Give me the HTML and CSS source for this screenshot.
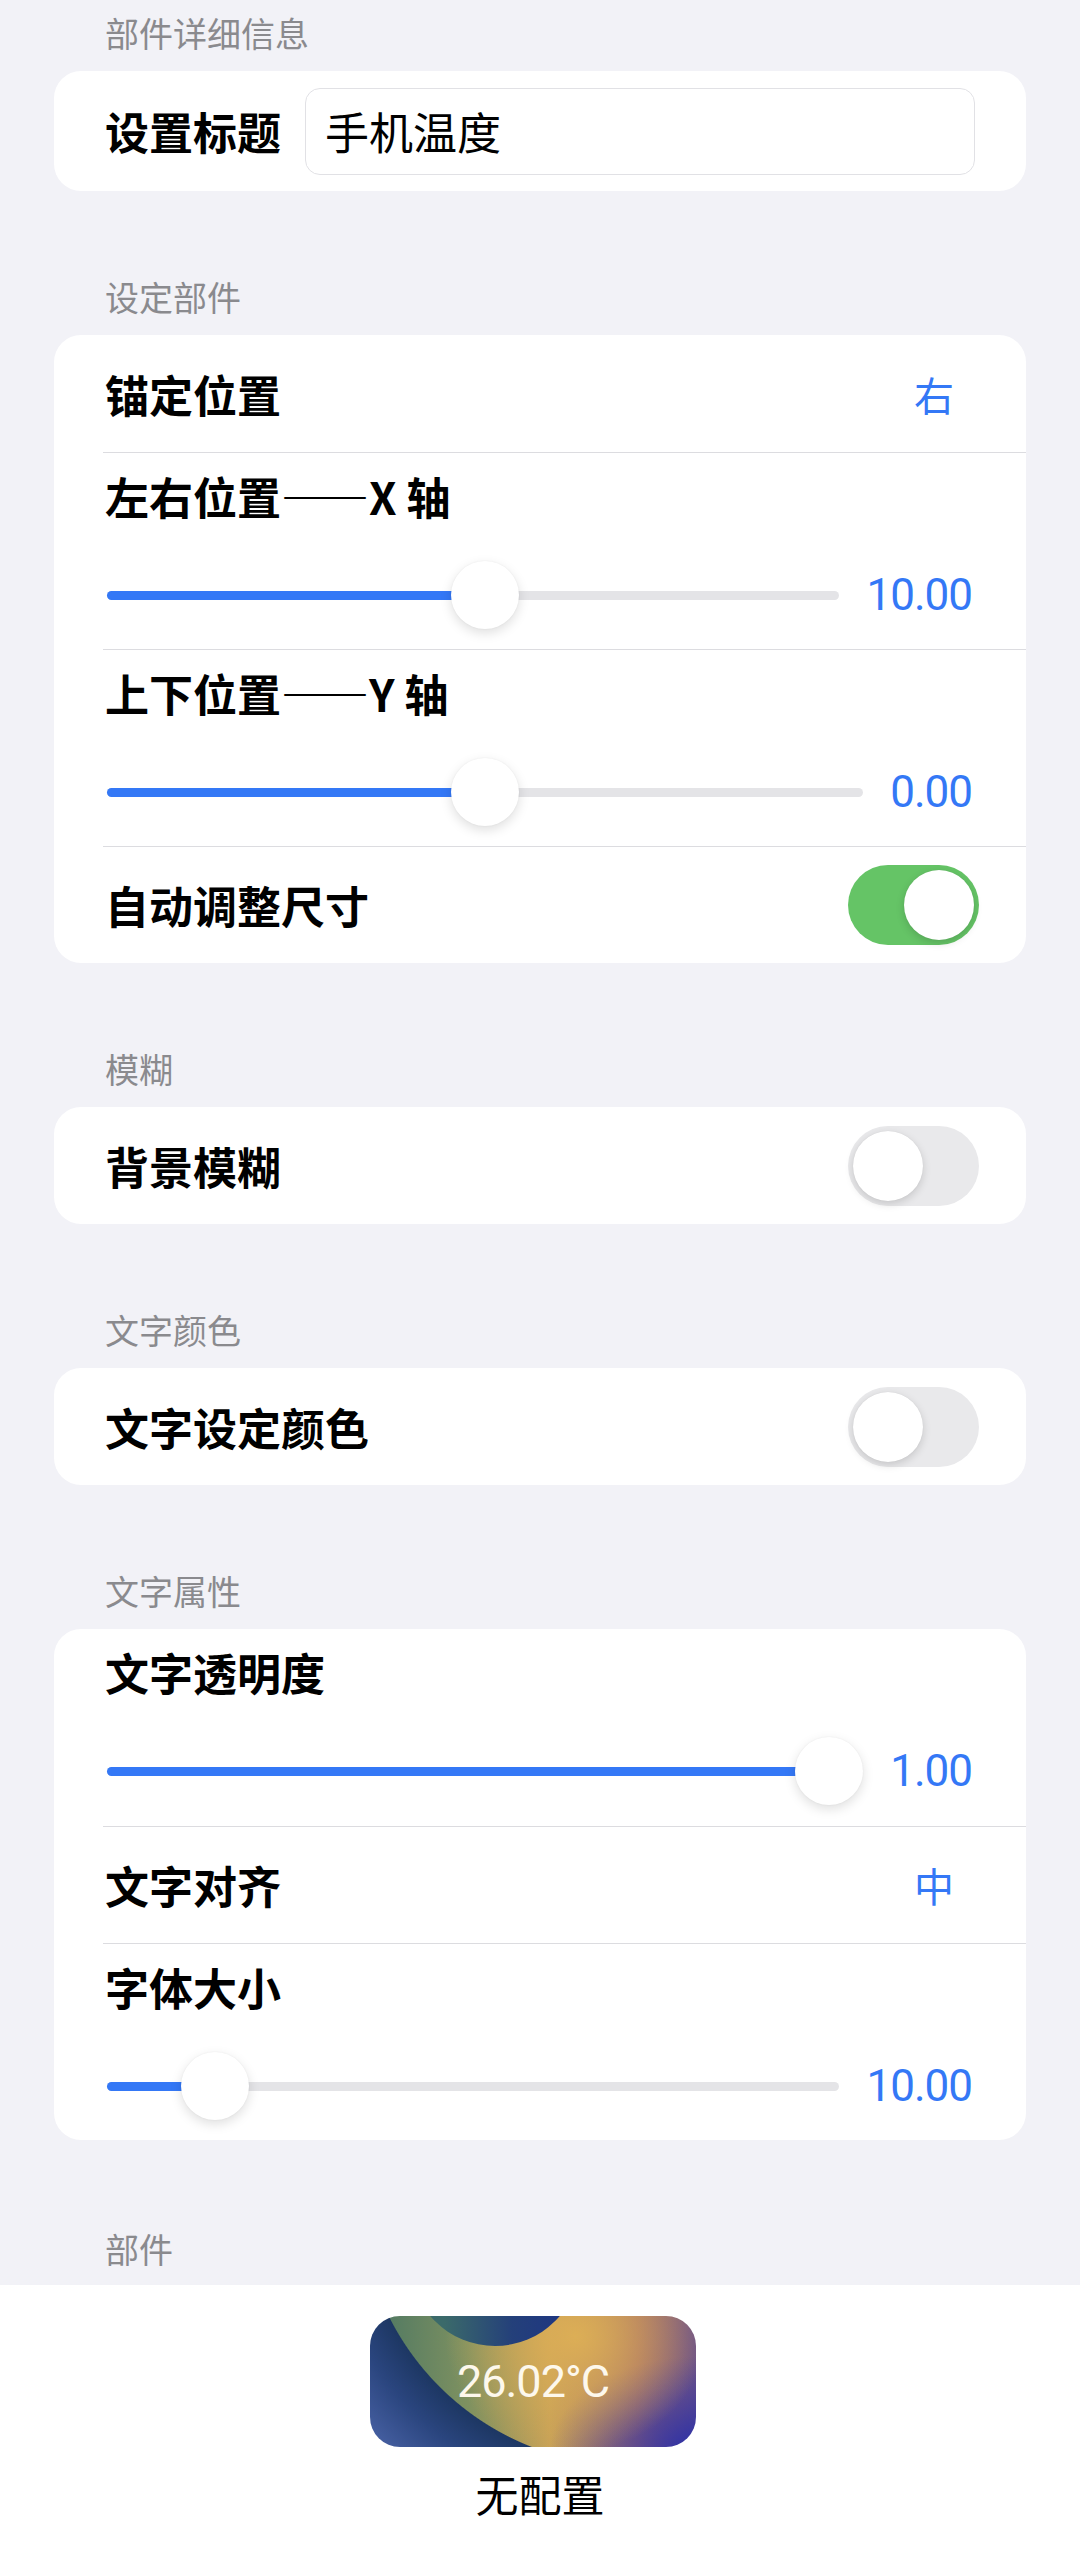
FILE: index.html
```html
<!DOCTYPE html>
<html lang="zh-CN">
<head>
  <meta charset="UTF-8">
  <title>部件设置</title>
  <link rel="stylesheet" href="styles.css">
</head>
<body>
<div class="page">
  <section class="group">
    <h2 class="group-title">部件详细信息</h2>
    <div class="card title-card">
      <span class="label">设置标题</span>
      <div class="text-field">手机温度</div>
    </div>
  </section>

  <section class="group">
    <h2 class="group-title">设定部件</h2>
    <div class="card">
      <div class="row">
        <span class="label">锚定位置</span>
        <span class="menu-value">右</span>
      </div>
      <div class="slider-row">
        <span class="label">左右位置——X 轴</span>
        <div class="slider-line">
          <div class="track" style="--pos: 0.517">
            <div class="fill"></div>
            <div class="thumb"></div>
          </div>
          <span class="num">10.00</span>
        </div>
      </div>
      <div class="slider-row">
        <span class="label">上下位置——Y 轴</span>
        <div class="slider-line">
          <div class="track" style="--pos: 0.5">
            <div class="fill"></div>
            <div class="thumb"></div>
          </div>
          <span class="num">0.00</span>
        </div>
      </div>
      <div class="row">
        <span class="label">自动调整尺寸</span>
        <span class="switch on"><span class="knob"></span></span>
      </div>
    </div>
  </section>

  <section class="group">
    <h2 class="group-title">模糊</h2>
    <div class="card">
      <div class="row">
        <span class="label">背景模糊</span>
        <span class="switch"><span class="knob"></span></span>
      </div>
    </div>
  </section>

  <section class="group">
    <h2 class="group-title">文字颜色</h2>
    <div class="card">
      <div class="row">
        <span class="label">文字设定颜色</span>
        <span class="switch"><span class="knob"></span></span>
      </div>
    </div>
  </section>

  <section class="group">
    <h2 class="group-title">文字属性</h2>
    <div class="card">
      <div class="slider-row">
        <span class="label">文字透明度</span>
        <div class="slider-line">
          <div class="track" style="--pos: 1">
            <div class="fill"></div>
            <div class="thumb"></div>
          </div>
          <span class="num">1.00</span>
        </div>
      </div>
      <div class="row">
        <span class="label">文字对齐</span>
        <span class="menu-value">中</span>
      </div>
      <div class="slider-row">
        <span class="label">字体大小</span>
        <div class="slider-line">
          <div class="track" style="--pos: 0.111">
            <div class="fill"></div>
            <div class="thumb"></div>
          </div>
          <span class="num">10.00</span>
        </div>
      </div>
    </div>
  </section>

  <section class="group last">
    <h2 class="group-title">部件</h2>
  </section>
</div>

<footer class="preview">
  <div class="widget">
    <span class="widget-text">26.02°C</span>
  </div>
  <div class="preview-name">无配置</div>
</footer>
</body>
</html>
```

FILE: styles.css
```css
html, body {
  margin: 0;
  padding: 0;
  background: #f2f2f7;
  font-family: "Noto Sans CJK SC", "Noto Sans", sans-serif;
  color: #000;
}
.page {
  padding: 16px 54px 0;
}
.group {
  margin-bottom: 89px;
}
.group.last {
  margin-top: 92px;
  margin-bottom: 0;
}
.group-title {
  margin: 0 0 21px 51px;
  font-size: 34px;
  line-height: 34px;
  font-weight: 400;
  color: #8a8a8e;
}
.group.last .group-title {
  margin-bottom: 19px;
}
.card {
  background: #fff;
  border-radius: 27px;
  overflow: hidden;
}
.label {
  font-size: 44px;
  line-height: 44px;
  font-weight: 700;
  white-space: nowrap;
}

/* title input */
.title-card {
  display: flex;
  align-items: center;
  padding: 16px 51px;
  height: 120px;
  box-sizing: border-box;
}
.text-field {
  flex: 1;
  margin-left: 24px;
  height: 87px;
  box-sizing: border-box;
  border: 1.5px solid #e1e1e5;
  border-radius: 15px;
  padding-left: 19px;
  display: flex;
  align-items: center;
  font-size: 44px;
}

/* plain rows */
.row {
  display: flex;
  align-items: center;
  justify-content: space-between;
  height: 117px;
  box-sizing: border-box;
  padding: 0 54px 0 51px;
}
.row + .row, .slider-row + .row, .row + .slider-row, .slider-row + .slider-row {
  border-top: 1px solid #dcdce0;
  margin-left: 49px;
  padding-left: 2px;
}
.menu-value {
  font-size: 40px;
  color: #3478f6;
  margin-right: 18px;
}

/* slider rows */
.slider-row {
  height: 197px;
  box-sizing: border-box;
  padding: 21px 54px 0 51px;
}
.slider-row .label {
  display: block;
}
.slider-line {
  display: flex;
  align-items: center;
  height: 68px;
  margin-top: 43px;
}
.track {
  flex: 1;
  position: relative;
  height: 9px;
  margin-left: 2px;
  border-radius: 5px;
  background: #e4e4e7;
}
.fill {
  height: 100%;
  border-radius: 5px;
  background: #3478f6;
  width: calc(var(--pos) * (100% - 68px) + 34px);
}
.thumb {
  position: absolute;
  top: 50%;
  left: calc(var(--pos) * (100% - 68px));
  width: 68px;
  height: 68px;
  margin-top: -34px;
  border-radius: 50%;
  background: #fff;
  box-shadow: 0 4px 12px rgba(0,0,0,0.13), 0 0 2px rgba(0,0,0,0.06);
}
.num {
  margin-left: 27px;
  font-family: Roboto, "Noto Sans", sans-serif;
  font-size: 44px;
  color: #3478f6;
  letter-spacing: -1px;
}

/* switches */
.switch {
  width: 131px;
  height: 80px;
  border-radius: 40px;
  background: #e9e9eb;
  margin-right: -7px;
  position: relative;
  flex-shrink: 0;
}
.switch .knob {
  position: absolute;
  top: 5px;
  left: 5px;
  width: 70px;
  height: 70px;
  border-radius: 50%;
  background: #fff;
  box-shadow: 0 3px 8px rgba(0,0,0,0.15), 0 0 1px rgba(0,0,0,0.1);
}
.switch.on {
  background: #65c466;
}
.switch.on .knob {
  left: 56px;
}

/* bottom preview */
.preview {
  background: #fff;
  height: 290px;
  box-sizing: border-box;
  padding-top: 31px;
  display: flex;
  flex-direction: column;
  align-items: center;
}
.widget {
  position: relative;
  width: 326px;
  height: 131px;
  margin-right: 14px;
  border-radius: 30px;
  overflow: hidden;
  display: flex;
  align-items: center;
  justify-content: center;
  background:
    radial-gradient(circle 362px at 260px -120px, transparent 0 269px, #1d3763 270px, #2a457e 305px, #4b64a8 362px),
    radial-gradient(ellipse 130px 115px at 205px 20px, #dcae56, rgba(220,174,86,0) 100%),
    radial-gradient(ellipse 150px 95px at 330px 135px, #2a2fa8, rgba(42,47,168,0) 100%),
    linear-gradient(90deg, #4b7663 0%, #7e9160 30%, #c8a257 55%, #a56d68 82%, #6f5486 100%);
}
.widget::before {
  content: "";
  position: absolute;
  left: 40px;
  top: -140px;
  width: 170px;
  height: 170px;
  border-radius: 50%;
  background: linear-gradient(90deg, #3b6a6a 20%, #24407a 60%, #1c3384 100%);
}
.widget-text {
  position: relative;
  font-family: Roboto, "Noto Sans", sans-serif;
  font-size: 45px;
  color: #fdf8ec;
  letter-spacing: -1px;
}
.preview-name {
  margin-top: 25px;
  font-size: 43px;
  line-height: 43px;
}
```
